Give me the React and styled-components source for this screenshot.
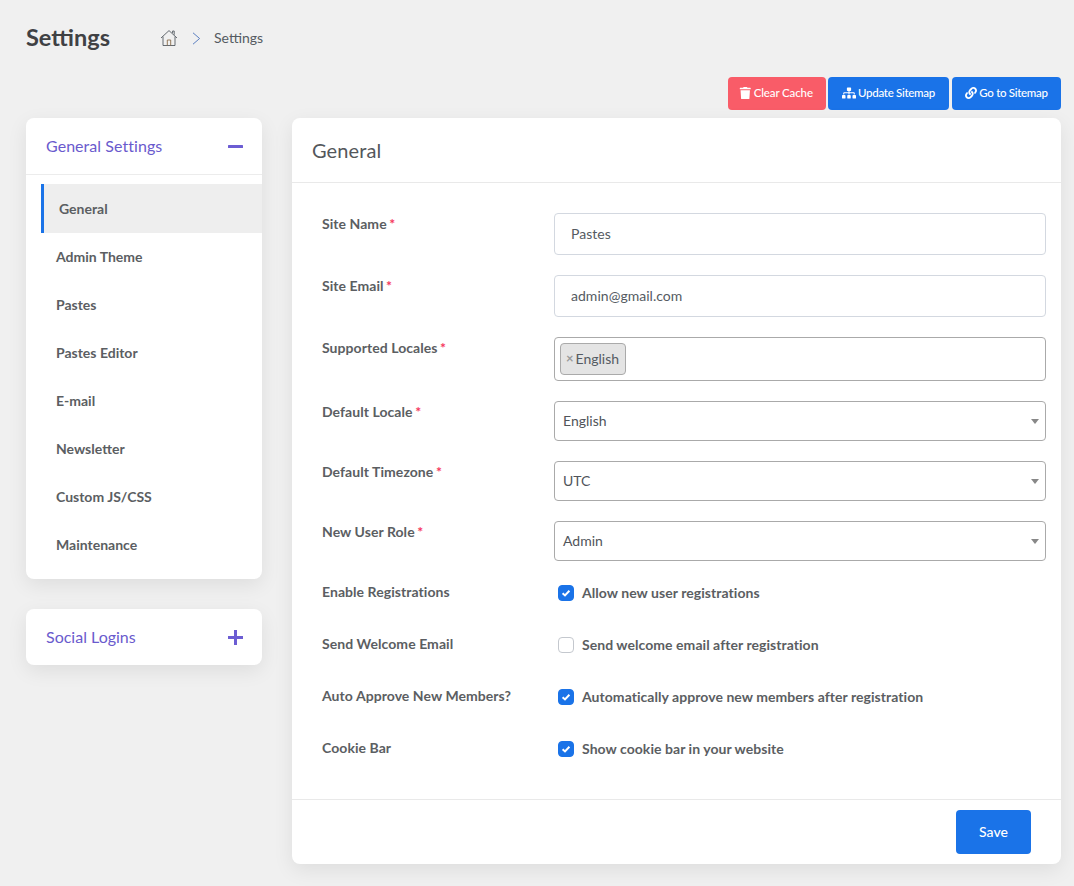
import React from "react";
import styled, { createGlobalStyle } from "styled-components";
import { FaTrash, FaSitemap, FaLink } from "react-icons/fa";

const Global = createGlobalStyle`
  html, body { margin: 0; padding: 0; }
  body { background: #f0f0f0; font-family: Lato, "Liberation Sans", sans-serif; color: #555; }
  * { box-sizing: border-box; }
`;

const Page = styled.div`
  width: 1074px;
  height: 886px;
  padding: 0 13px 22px 26px;
  overflow: hidden;
`;

const TopBar = styled.header`
  display: flex;
  align-items: center;
  height: 76px;
`;

const Title = styled.h1`
  margin: -2px 0 0;
  width: 134px;
  font-size: 23.5px;
  line-height: 32px;
  font-weight: 700;
  color: #3f4144;
`;

const Crumbs = styled.nav`
  display: flex;
  align-items: center;
  font-size: 14px;
  color: #555b62;
`;

const CrumbText = styled.span`
  margin-top: -2px;
`;

const CrumbSep = styled.svg`
  width: 9px;
  height: 13px;
  margin: 0 13px 0 14px;
`;

const Actions = styled.div`
  display: flex;
  justify-content: flex-end;
  gap: 2px;
  height: 33px;
  margin-top: 1px;
  margin-bottom: 8px;
`;

const ActionButton = styled.button`
  display: flex;
  align-items: center;
  justify-content: center;
  gap: 2px;
  width: ${(p) => p.$w}px;
  margin-left: ${(p) => p.$ml || 0}px;
  border: 0;
  border-radius: 4px;
  padding: 0 ${(p) => p.$pr || 0}px 2px 0;
  background: ${(p) => p.$bg};
  color: #fff;
  font-family: inherit;
  font-size: 11.5px;
  letter-spacing: ${(p) => p.$ls ?? -0.3}px;
  font-weight: 500;
  svg { margin-top: 1px; }
`;

const Columns = styled.div`
  display: flex;
  align-items: flex-start;
  gap: 30px;
`;

const Sidebar = styled.aside`
  width: 236px;
  flex: none;
  display: flex;
  flex-direction: column;
  gap: 30px;
`;

const Card = styled.section`
  background: #fff;
  border-radius: 8px;
  box-shadow: 0 6px 20px rgba(0, 0, 0, 0.08);
`;

const AccordionHead = styled.div`
  display: flex;
  align-items: center;
  justify-content: space-between;
  height: ${(p) => (p.$open ? 57 : 56)}px;
  padding: 0 19px 0 20px;
  font-size: 16px;
  color: #6a5acd;
  border-bottom: ${(p) => (p.$open ? "1px solid #ececec" : "0")};
`;

const HeadLabel = styled.span`
  margin-top: -2px;
  letter-spacing: ${(p) => (p.$open ? 0.05 : 0)}px;
`;

const ToggleIcon = styled.svg`
  width: 15px;
  height: 15px;
  display: block;
`;

const SideList = styled.ul`
  list-style: none;
  margin: 0;
  padding: 9px 0 11px 15px;
`;

const SideItem = styled.li`
  height: ${(p) => (p.$active ? 49 : 48)}px;
  display: flex;
  align-items: center;
  padding-left: ${(p) => (p.$active ? 15 : 12)}px;
  font-size: 14px;
  font-weight: 700;
  color: #5b5e62;
  background: ${(p) => (p.$active ? "#eeeeee" : "transparent")};
  border-left: 3px solid ${(p) => (p.$active ? "#1a73e8" : "transparent")};
  margin-bottom: ${(p) => (p.$active ? -1 : 0)}px;
`;

const MainCard = styled(Card)`
  width: 769px;
  height: 746px;
  display: flex;
  flex-direction: column;
`;

const MainHead = styled.div`
  height: 65px;
  display: flex;
  align-items: center;
  padding: 0 20px;
  font-size: 20px;
  letter-spacing: 0.1px;
  color: #54575b;
  border-bottom: 1px solid #e9e9e9;
`;

const FormBody = styled.div`
  flex: 1;
  padding: 30px 15px 0 30px;
  display: flex;
  flex-direction: column;
  gap: 20px;
`;

const Row = styled.div`
  display: grid;
  grid-template-columns: 232px 1fr;
`;

const Label = styled.label`
  font-size: 14px;
  line-height: 22px;
  font-weight: 700;
  letter-spacing: 0.06px;
  color: #5b5e62;
`;

const Req = styled.span`
  color: #f5365c;
  margin-left: 2.5px;
`;

const TextInput = styled.div`
  height: 42px;
  display: flex;
  align-items: center;
  padding: 0 16px 2px;
  border: 1px solid #d3d8e0;
  border-radius: 4px;
  font-size: 14px;
  letter-spacing: 0.03px;
  color: #555b62;
`;

const MultiSelect = styled.div`
  height: 44px;
  display: flex;
  align-items: center;
  padding: 0 5px;
  border: 1px solid #aaa;
  border-radius: 4px;
`;

const Tag = styled.span`
  height: 32px;
  display: flex;
  align-items: center;
  gap: 2px;
  padding: 0 6px 2px 5px;
  background: #e4e4e4;
  border: 1px solid #aaa;
  border-radius: 4px;
  font-size: 14px;
  color: #555b62;
`;

const TagX = styled.span`
  color: #999;
  font-size: 13px;
  font-weight: 700;
`;

const SelectBox = styled.div`
  height: 40px;
  display: flex;
  align-items: center;
  justify-content: space-between;
  padding: 0 6px 0 8px;
  border: 1px solid #aaa;
  border-radius: 4px;
  font-size: 14px;
  color: #50545a;
`;

const SelectValue = styled.span`
  margin-top: -2px;
`;

const Caret = styled.span`
  width: 0;
  height: 0;
  border-left: 4px solid transparent;
  border-right: 4px solid transparent;
  border-top: 5px solid #888;
`;

const CheckWrap = styled.div`
  display: flex;
  align-items: center;
  gap: 8px;
  height: 24px;
  padding-left: 4px;
  margin-bottom: 8px;
  font-size: 14px;
  font-weight: 700;
  letter-spacing: 0.05px;
  color: #5b5e62;
`;

const CheckText = styled.span`
  margin-top: -2px;
`;

const Box = styled.span`
  width: 16px;
  height: 16px;
  flex: none;
  display: flex;
  align-items: center;
  justify-content: center;
  border-radius: 4px;
  background: ${(p) => (p.$on ? "#1a73e8" : "#fff")};
  border: 1px solid ${(p) => (p.$on ? "#1a73e8" : "#c4c8ce")};
`;

const Footer = styled.footer`
  height: 65px;
  display: flex;
  justify-content: flex-end;
  padding: 10px 30px 10px 0;
  border-top: 1px solid #e9e9e9;
`;

const SaveButton = styled.button`
  width: 75px;
  height: 44px;
  border: 0;
  border-radius: 4px;
  padding: 0 0 2px;
  background: #1a73e8;
  color: #fff;
  font-family: inherit;
  font-size: 14px;
  font-weight: 500;
`;

const Home = () => (
  <svg width="18" height="18" viewBox="0 0 18 18" fill="none" stroke="#555b62" strokeWidth="0.9">
    <path d="M1 9 L9 1.6 L17 9" />
    <path d="M12.6 2 V4 M12.6 2 H14.2 V5.8" />
    <path d="M3 7.6 V16.5 H15 V7.6" />
    <path d="M7.3 16.5 V11 H10.7 V16.5" stroke="#8a6d4b" />
  </svg>
);

const Check = () => (
  <svg width="10" height="10" viewBox="0 0 10 10" fill="none" stroke="#fff" strokeWidth="2">
    <path d="M1.6 5.2 L4 7.4 L8.4 2.8" />
  </svg>
);

const items = ["General", "Admin Theme", "Pastes", "Pastes Editor", "E-mail", "Newsletter", "Custom JS/CSS", "Maintenance"];

const Field = ({ label, required, children }) => (
  <Row>
    <Label>
      {label}
      {required && <Req>*</Req>}
    </Label>
    <div>{children}</div>
  </Row>
);

const Select = ({ value }) => (
  <SelectBox>
    <SelectValue>{value}</SelectValue>
    <Caret />
  </SelectBox>
);

const CheckField = ({ label, text, on }) => (
  <Row>
    <Label>{label}</Label>
    <CheckWrap>
      <Box $on={on}>{on && <Check />}</Box>
      <CheckText>{text}</CheckText>
    </CheckWrap>
  </Row>
);

export default function App() {
  return (
    <Page>
      <Global />
      <TopBar>
        <Title>Settings</Title>
        <Crumbs>
          <Home />
          <CrumbSep viewBox="0 0 9 13" fill="none" stroke="#5b7fc0" strokeWidth="1">
            <path d="M1 0.8 L7.6 6.5 L1 12.2" />
          </CrumbSep>
          <CrumbText>Settings</CrumbText>
        </Crumbs>
      </TopBar>
      <Actions>
        <ActionButton $w={98} $pr={2} $ls={-0.12} $bg="#f95c68">
          <FaTrash size={12.5} />
          Clear Cache
        </ActionButton>
        <ActionButton $w={121} $bg="#1a73e8">
          <FaSitemap size={14} />
          Update Sitemap
        </ActionButton>
        <ActionButton $w={109} $ml={1} $bg="#1a73e8">
          <FaLink size={12} />
          Go to Sitemap
        </ActionButton>
      </Actions>
      <Columns>
        <Sidebar>
          <Card>
            <AccordionHead $open>
              <HeadLabel $open>General Settings</HeadLabel>
              <ToggleIcon viewBox="0 0 15 15">
                <rect x="0" y="6" width="15" height="3" rx="0.5" fill="#6c5dd3" />
              </ToggleIcon>
            </AccordionHead>
            <SideList>
              {items.map((t, i) => (
                <SideItem key={t} $active={i === 0}>
                  {t}
                </SideItem>
              ))}
            </SideList>
          </Card>
          <Card>
            <AccordionHead>
              <HeadLabel>Social Logins</HeadLabel>
              <ToggleIcon viewBox="0 0 15 15">
                <path d="M6 0h3v6h6v3H9v6H6V9H0V6h6z" fill="#6c5dd3" />
              </ToggleIcon>
            </AccordionHead>
          </Card>
        </Sidebar>
        <MainCard>
          <MainHead>General</MainHead>
          <FormBody>
            <Field label="Site Name" required>
              <TextInput>Pastes</TextInput>
            </Field>
            <Field label="Site Email" required>
              <TextInput>admin@gmail.com</TextInput>
            </Field>
            <Field label="Supported Locales" required>
              <MultiSelect>
                <Tag>
                  <TagX>×</TagX>English
                </Tag>
              </MultiSelect>
            </Field>
            <Field label="Default Locale" required>
              <Select value="English" />
            </Field>
            <Field label="Default Timezone" required>
              <Select value="UTC" />
            </Field>
            <Field label="New User Role" required>
              <Select value="Admin" />
            </Field>
            <CheckField label="Enable Registrations" text="Allow new user registrations" on />
            <CheckField label="Send Welcome Email" text="Send welcome email after registration" />
            <CheckField label="Auto Approve New Members?" text="Automatically approve new members after registration" on />
            <CheckField label="Cookie Bar" text="Show cookie bar in your website" on />
          </FormBody>
          <Footer>
            <SaveButton>Save</SaveButton>
          </Footer>
        </MainCard>
      </Columns>
    </Page>
  );
}
